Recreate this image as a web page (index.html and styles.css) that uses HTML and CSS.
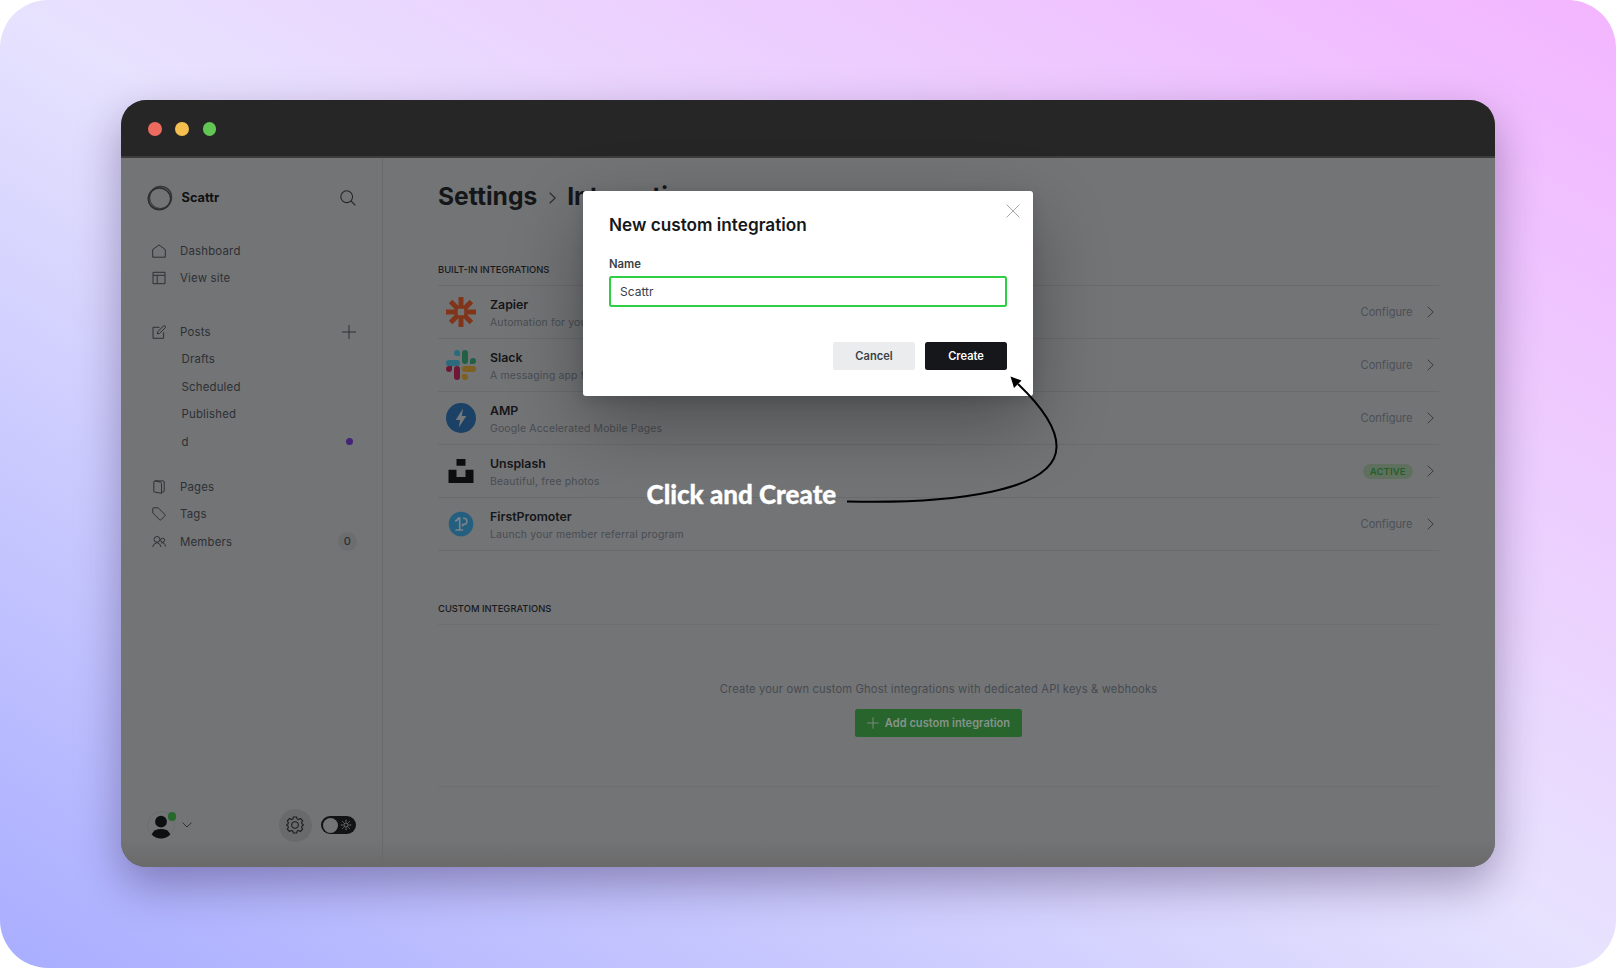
FILE: index.html
```
<!DOCTYPE html>
<html lang="en">
<head>
<meta charset="utf-8">
<title>Integrations</title>
<link rel="stylesheet" href="styles.css">
</head>
<body>
<div class="stage">
  <div class="window">
    <div class="titlebar"><i class="light red"></i><i class="light yellow"></i><i class="light green"></i></div>
    <div class="app">
      <aside class="sidebar">
        <div class="brand">
          <svg class="logo" viewBox="0 0 26 26"><g fill="none" stroke="#2c2d2f"><ellipse cx="12.4" cy="13.800" rx="11.200" ry="10.800" stroke-width="1.300"/><ellipse cx="13.600" cy="12.500" rx="11" ry="11.200" stroke-width="1.300" opacity=".65"/><ellipse cx="13" cy="13" rx="12" ry="10.800" stroke-width="1.600" opacity=".55" transform="rotate(-50 13 13)"/></g></svg>
          <b class="name">Scattr</b>
          <svg class="search" viewBox="0 0 16 16"><g fill="none" stroke="#242527" stroke-width="1.1"><circle cx="6.7" cy="6.7" r="5.9"/><path d="M11 11l4.4 4.4"/></g></svg>
        </div>
        <nav class="nav">
          <div class="item"><svg viewBox="0 0 14 14"><path d="M.7 5.600L7 .9l6.300 4.700v7.600H.7z"/></svg><span>Dashboard</span></div>
          <div class="item"><svg viewBox="0 0 14 14"><path d="M1 1.3h12v11.4H1zM1 4.3h12M5.2 4.3v8.4"/></svg><span>View site</span></div>
        </nav>
        <nav class="nav posts">
          <div class="item"><svg viewBox="0 0 14 14"><path d="M7.5 2.3H1v11h10.6V7.2M5.3 8.9l.6-2.4L11.3 1q1-.8 1.8 0t.1 1.8L7.7 8.3z"/></svg><span>Posts</span><svg class="plus" viewBox="0 0 14 14"><path d="M7 0v14M0 7h14"/></svg></div>
          <div class="item sub"><span>Drafts</span></div>
          <div class="item sub"><span>Scheduled</span></div>
          <div class="item sub"><span>Published</span></div>
          <div class="item sub"><span>d</span><i class="dot"></i></div>
        </nav>
        <nav class="nav pages">
          <div class="item"><svg viewBox="0 0 14 14"><path d="M3 12.2q-1.2 0-1.2-1.1V2Q1.8.9 3 .9h8q1.2 0 1.2 1.1v9q0 1.1-1.3 1.1H9.6M3 .9l5.2 1.2q1.3.4 1.3 1.5v9.7L3 12.1"/></svg><span>Pages</span></div>
          <div class="item"><svg viewBox="0 0 14 14"><path d="M.8 1.5Q.8.8 1.5.8h4.7L13 7.6q.5.6 0 1.1L8.8 12.9q-.5.5-1 0L.8 6z"/></svg><span>Tags</span></div>
          <div class="item"><svg viewBox="0 0 14 14"><circle cx="5" cy="4.400" r="2.900"/><circle cx="10.600" cy="5.200" r="2"/><path d="M.7 12Q1.500 8.200 5 7.600q3.300.6 4 4.400M9 8q3.700-1.300 4.400 3.500"/></svg><span>Members</span><em class="count">0</em></div>
        </nav>
        <div class="foot">
          <div class="avatar"><svg viewBox="0 0 28 28"><circle cx="14" cy="14" r="13.500" fill="none" stroke="#6b6c6e" stroke-width=".8"/><circle cx="14" cy="10.700" r="5.900" fill="#0e0f10"/><path d="M4.700 23.400Q7 18 14 18t9.300 5.400Q19.500 27.500 14 27.500t-9.300-4.100z" fill="#0e0f10"/></svg><i class="online"></i></div>
          <svg class="down" viewBox="0 0 10 6"><path d="M.5.600L5 5 9.500.600" fill="none" stroke="#303234"/></svg>
          <div class="gear"><svg viewBox="-9 -9 18 18"><g fill="none" stroke="#1c1d1f" stroke-width="1.100" stroke-linejoin="round"><circle r="3.300"/><path d="M-1.600-8h3.200l.6 2.100 1.300.5 1.900-1.100 2.300 2.300-1.100 1.900.5 1.300 1.100.4v1.200l-1.100.4-.5 1.300 1.100 1.900-2.300 2.300-1.900-1.100-1.300.5-.6 2.100h-3.200l-.6-2.100-1.300-.5-1.900 1.100-2.300-2.300 1.100-1.900-.5-1.300-1.100-.4v-1.200l1.100-.4.5-1.300-1.100-1.900 2.300-2.300 1.900 1.100 1.300-.5z"/></g></svg></div>
          <div class="toggle"><i></i><svg viewBox="-6 -6 12 12"><g fill="none" stroke="#77787a" stroke-width="1"><circle r="2.100"/><path d="M0-3.300v-1.900M0 3.300v1.900M-3.300 0h-1.900M3.300 0h1.900M-2.400-2.400l-1.300-1.300M2.400 2.400l1.300 1.300M-2.400 2.400l-1.300 1.300M2.400-2.400l1.300-1.300"/></g></svg></div>
        </div>
      </aside>
      <main class="main">
        <h1 class="crumbs"><span>Settings</span><svg viewBox="0 0 7 12"><path d="M.7.700L6.200 6 .7 11.300" fill="none" stroke="#2a2c2e" stroke-width="1.200"/></svg><span>Integrations</span></h1>
        <h2 class="label">BUILT-IN INTEGRATIONS</h2>
        <section class="list">
          <div class="row"><svg class="ico" viewBox="-15 -15 30 30"><g stroke="#803419" stroke-width="5"><path d="M0-15V-4M0 15V4M-15 0H-4M15 0H4M-10.400-10.400L-3.500-3.500M10.400 10.400L3.500 3.500M-10.400 10.400L-3.500 3.500M10.400-10.400L3.500-3.500"/></g><rect x="-4" y="-4" width="8" height="8" rx="1.500" fill="#737476" stroke="#803419" stroke-width="1.500"/></svg><div class="info"><b>Zapier</b><p>Automation for your apps</p></div><span class="conf">Configure</span><svg class="next" viewBox="0 0 7 12"><path d="M.7.700L6.200 6 .7 11.300"/></svg></div>
          <div class="row"><svg class="ico" viewBox="0 0 30 30"><g fill="#2c6a7d"><rect y="10" width="14" height="6" rx="3"/><path d="M14 6V3a3 3 0 1 0-3 3z"/></g><g fill="#235f45"><rect x="16" width="6" height="14" rx="3"/><path d="M24 14h3a3 3 0 1 0-3-3z"/></g><g fill="#7d5f20"><rect x="16" y="16" width="14" height="6" rx="3"/><path d="M16 24v3a3 3 0 1 0 3-3z"/></g><g fill="#6d1935"><rect x="8" y="16" width="6" height="14" rx="3"/><path d="M6 16H3a3 3 0 1 0 3 3z"/></g></svg><div class="info"><b>Slack</b><p>A messaging app for teams</p></div><span class="conf">Configure</span><svg class="next" viewBox="0 0 7 12"><path d="M.7.700L6.200 6 .7 11.300"/></svg></div>
          <div class="row"><svg class="ico" viewBox="0 0 30 30"><circle cx="15" cy="15" r="15" fill="#1b4266"/><path d="M17 5.500L9.700 17h4.400l-1.300 7.500L20.300 13h-4.500z" fill="#77787a"/></svg><div class="info"><b>AMP</b><p>Google Accelerated Mobile Pages</p></div><span class="conf">Configure</span><svg class="next" viewBox="0 0 7 12"><path d="M.7.700L6.200 6 .7 11.300"/></svg></div>
          <div class="row"><svg class="ico" viewBox="0 0 30 30"><path d="M10.500 3h9v6.700h-9zM2.500 13.700h8v7.200h9v-7.200h8V27h-25z" fill="#0c0d0f"/></svg><div class="info"><b>Unsplash</b><p>Beautiful, free photos</p></div><span class="active">ACTIVE</span><svg class="next" viewBox="0 0 7 12"><path d="M.7.700L6.200 6 .7 11.300"/></svg></div>
          <div class="row"><svg class="ico" viewBox="0 0 30 30"><circle cx="15" cy="15" r="12.300" fill="#245f80"/><path d="M9 12c2.200-.3 3-1.400 3.300-3h1.400v12M9.500 21h7.700M17 9.300h.8a3.100 3.100 0 0 1 0 6.200h-1.200v2" fill="none" stroke="#7b8489" stroke-width="1.600"/></svg><div class="info"><b>FirstPromoter</b><p>Launch your member referral program</p></div><span class="conf">Configure</span><svg class="next" viewBox="0 0 7 12"><path d="M.7.700L6.200 6 .7 11.300"/></svg></div>
        </section>
        <h2 class="label custom-label">CUSTOM INTEGRATIONS</h2>
        <section class="custom">
          <p>Create your own custom Ghost integrations with dedicated API keys &amp; webhooks</p>
          <button class="add"><svg viewBox="0 0 12 12"><path d="M6 .3v11.400M.3 6h11.400" stroke="#7b8a7d" fill="none"/></svg><span>Add custom integration</span></button>
        </section>
      </main>
    </div>
  </div>
  <div class="modal">
    <svg class="close" viewBox="0 0 14 14"><path d="M.5.500l13 13M13.500.500l-13 13" fill="none" stroke="#a9abad"/></svg>
    <h3>New custom integration</h3>
    <label class="field"><span>Name</span><input type="text" value="Scattr"></label>
    <div class="actions"><button class="btn">Cancel</button><button class="btn primary">Create</button></div>
  </div>
  <div class="note">Click and Create</div>
  <svg class="arrow" viewBox="0 0 220 140"><path d="M7 131.500C110 134 216 122 216.500 77C217 56 199 34 178 14" fill="none" stroke="#000" stroke-width="2"/><path d="M170.500 6.500l11 4-7.500 7.500z"/></svg>
</div>
</body>
</html>
```
FILE: styles.css
```
* { box-sizing: border-box; }
body { margin: 0; background: #fff; font-family: Inter, "Liberation Sans", sans-serif; overflow: hidden; }
h1, h2, h3, p { margin: 0; }
svg { display: block; flex: none; }
button, input { font: inherit; }
.stage { position: relative; width: 1616px; height: 968px; padding: 99.5px 121px 0; border-radius: 48px; background: linear-gradient(to top right, #a8adff 0%, #e7e2fe 50%, #f3b5ff 100%); }
.window { width: 1374px; height: 767px; border-radius: 25px; overflow: hidden; background: #737476; box-shadow: 0 18px 45px rgba(30, 15, 60, .36); }
.titlebar { display: flex; gap: 13.5px; align-items: center; height: 58.5px; padding: 2px 27px 0; background: #262626; border-bottom: 2px solid #3c3c3d; }
.light { width: 13.8px; height: 13.8px; border-radius: 50%; }
.red { background: #ed6a5f; }
.yellow { background: #f5bf4f; }
.green { background: #62c655; }
.app { display: flex; height: 708.5px; background: linear-gradient(#737476 96%, #6a6a6a); }
.sidebar { display: flex; flex-direction: column; width: 262px; padding: 25px 26px 24.5px 26px; border-right: 1px solid #68696b; }
.brand { display: flex; align-items: center; height: 29px; }
.logo { width: 26px; height: 26px; }
.name { margin-left: 8.5px; font-size: 12.8px; font-weight: 700; color: #0f1011; }
.search { width: 16px; height: 16px; margin-left: auto; }
.nav { padding-top: 25px; color: #2d3034; font-size: 11.4px; letter-spacing: .2px; }
.posts { padding-top: 26px; }
.pages { padding-top: 17.6px; }
.item { display: flex; align-items: center; height: 27.5px; padding-left: 5px; }
.item svg { width: 14px; height: 14px; margin-right: 14px; fill: none; stroke: #2b2d30; stroke-width: .95; }
.item .plus { margin: 0 0 0 auto; }
.sub { padding-left: 34.5px; }
.dot { width: 7px; height: 7px; margin: 0 3.5px 0 auto; border-radius: 50%; background: #432477; }
.count { width: 19px; margin-left: auto; margin-right: -1px; border-radius: 10px; background: #6c6d6f; font: 500 11px/19px Inter, sans-serif; text-align: center; }
.foot { display: flex; align-items: center; height: 34px; margin-top: auto; }
.avatar { position: relative; width: 28px; height: 28px; }
.online { position: absolute; right: -1px; top: 1px; width: 8.5px; height: 8.5px; border-radius: 50%; background: #27692d; }
.down { width: 10px; height: 6px; margin-left: 6.5px; }
.gear { display: grid; place-items: center; width: 33px; height: 33px; margin-left: auto; margin-right: 9.5px; border-radius: 50%; background: #696a6c; }
.gear svg { width: 18px; height: 18px; }
.toggle { display: flex; align-items: center; justify-content: space-between; width: 35px; height: 18px; padding: 0 4px 0 2px; border-radius: 9px; background: #121315; }
.toggle i { width: 15px; height: 15px; border-radius: 50%; background: #737476; }
.toggle svg { width: 12px; height: 12px; }
.main { flex: 1; padding: 19px 56px 0 55px; }
.crumbs { display: flex; align-items: center; height: 38px; font-size: 24.6px; font-weight: 700; color: #151618; }
.crumbs svg { width: 7px; height: 12px; margin: 3px 11.5px 0 11.5px; }
.label { height: 11px; margin-top: 49px; font-size: 9.4px; line-height: 11px; font-weight: 500; color: #18191b; }
.list { margin-top: 10px; border-top: 1px solid #6a6b6d; }
.row { display: flex; align-items: center; height: 53px; padding: 0 5px 0 8px; border-bottom: 1px solid #6a6b6d; }
.ico { width: 30px; height: 30px; }
.info { flex: 1; margin-left: 14px; padding-top: 3px; }
.info b { display: block; font-size: 12.35px; line-height: 17px; font-weight: 600; color: #151618; }
.info p { font-size: 10.4px; line-height: 19px; letter-spacing: .18px; color: #484d53; }
.conf { font-size: 11.1px; color: #4b5056; }
.next { width: 7px; height: 12px; margin-left: 14.5px; fill: none; stroke: #3a3c3f; }
.active { height: 15px; padding: 0 7px; border-radius: 8px; background: #60705f; color: #205f29; font-size: 9.5px; line-height: 15px; font-weight: 600; letter-spacing: .1px; }
.custom-label { margin-top: 51.5px; }
.custom { display: flex; flex-direction: column; align-items: center; height: 163px; margin-top: 10px; padding-top: 55px; border-top: 1px solid #6d6e70; border-bottom: 1px solid #6d6e70; color: #464b51; font-size: 11.2px; line-height: 18px; letter-spacing: .14px; }
.add { display: flex; align-items: center; justify-content: center; gap: 6px; width: 167px; height: 28px; margin-top: 11.5px; padding: 0; border: 0; border-radius: 2.5px; background: #27652d; color: #85938a; font-size: 11.1px; font-weight: 600; letter-spacing: 0; }
.add svg { width: 12px; height: 12px; }
.modal { position: absolute; left: 583px; top: 191px; width: 450px; height: 205px; padding: 21px 26px 0; border-radius: 3px; background: #fff; box-shadow: 0 28px 75px rgba(0, 0, 0, .32), 0 4px 14px rgba(0, 0, 0, .12); }
.close { position: absolute; right: 13px; top: 13px; width: 14px; height: 14px; }
.modal h3 { height: 26px; font-size: 17.2px; line-height: 26px; font-weight: 600; color: #15171a; }
.field { display: block; margin-top: 17px; font-size: 11.3px; line-height: 18px; font-weight: 600; color: #394047; }
.field input { display: block; width: 398px; height: 31px; margin-top: 3px; padding: 0 9px; border: 2px solid #30cf43; border-radius: 2.5px; outline: 0; color: #394047; font-size: 12px; font-weight: 400; }
.actions { display: flex; justify-content: flex-end; gap: 10px; margin-top: 35px; }
.btn { width: 82px; height: 28px; padding: 0; border: 0; border-radius: 2.5px; background: #ebeced; color: #394047; font-size: 11.1px; font-weight: 600; }
.primary { background: #15171a; color: #fff; }
.note { position: absolute; left: 646.5px; top: 478px; color: #fff; font: 900 26px/32px Lato, sans-serif; white-space: nowrap; -webkit-text-stroke: .3px #fff; }
.arrow { position: absolute; left: 840px; top: 370px; width: 220px; height: 140px; }
```
